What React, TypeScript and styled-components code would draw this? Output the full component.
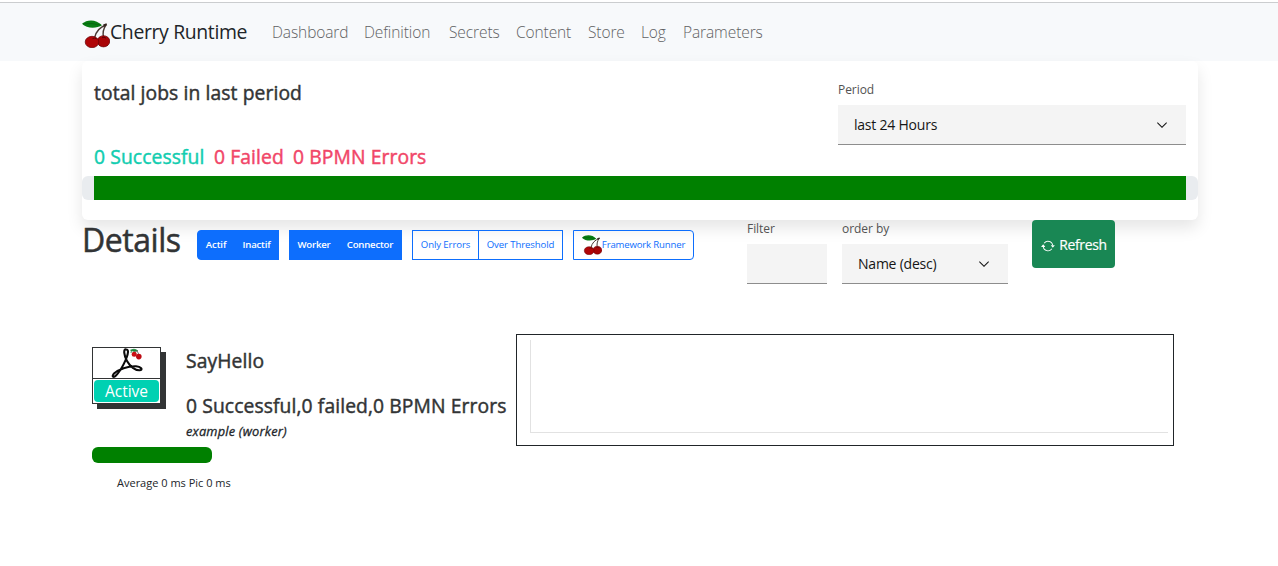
import React from "react";
import styled, { createGlobalStyle } from "styled-components";

const GlobalStyle = createGlobalStyle`
  *, *::before, *::after { box-sizing: border-box; }
  body {
    margin: 0;
    background: #fff;
    color: #212529;
    font-family: "Segoe UI", "Open Sans", "Noto Sans", sans-serif;
    font-size: 16px;
    line-height: 24px;
  }
  h1, h2, h3, p { margin: 0; }
`;

const Page = styled.div`
  height: 566px;
  padding-top: 2px;
  overflow: hidden;
`;

const Navbar = styled.nav`
  display: flex;
  align-items: center;
  height: 59px;
  padding: 0 82px;
  border-top: 1px solid #cbcdcf;
  background: #f7f9fb;
`;

const Brand = styled.a`
  display: flex;
  align-items: center;
  width: 190px;
  font-size: 19.4px;
  letter-spacing: -0.35px;
  white-space: nowrap;
`;

const NavLink = styled.a<{ $w: number; $ls?: number }>`
  flex: none;
  width: ${(p) => p.$w}px;
  color: #5f6163;
  font-size: 15.5px;
  font-weight: 300;
  letter-spacing: ${(p) => p.$ls ?? -0.1}px;
  line-height: 22px;
  white-space: nowrap;
`;

const Container = styled.main`
  width: 1116px;
  margin-left: 82px;
`;

const SummaryCard = styled.section`
  height: 159px;
  border-radius: 6px;
  background: #fff;
  box-shadow: 0 8px 16px rgba(0, 0, 0, 0.1);
`;

const SummaryTop = styled.div`
  display: flex;
  justify-content: space-between;
  height: 115px;
  padding: 0 12px;
`;

const SummaryText = styled.div`
  display: flex;
  flex-direction: column;
  justify-content: space-between;
  padding: 20px 0 7px;
`;

const Title = styled.h3<{ $ls?: number }>`
  color: #323435;
  font-size: 19.3px;
  font-weight: 400;
  line-height: 24px;
  letter-spacing: ${(p) => p.$ls ?? 0.1}px;
  -webkit-text-stroke: 0.45px currentColor;
  white-space: nowrap;
`;

const Counters = styled.div`
  display: flex;
`;

const Counter = styled.span<{ $color: string; $w: number }>`
  width: ${(p) => p.$w}px;
  color: ${(p) => p.$color};
  font-size: 19.3px;
  letter-spacing: 0.1px;
  -webkit-text-stroke: 0.45px currentColor;
  white-space: nowrap;
`;

const Field = styled.div<{ $w: number; $top?: number; $mr?: number }>`
  flex: none;
  width: ${(p) => p.$w}px;
  margin-right: ${(p) => p.$mr ?? 0}px;
  padding-top: ${(p) => p.$top ?? 0}px;
`;

const Label = styled.label`
  display: block;
  height: 24px;
  color: #525252;
  font-size: 12px;
  line-height: 18px;
  letter-spacing: -0.05px;
`;

const SelectBox = styled.div`
  display: flex;
  align-items: center;
  justify-content: space-between;
  height: 40px;
  padding: 0 16px;
  border-bottom: 1px solid #8d8d8d;
  background: #f4f4f4;
  color: #161616;
  font-size: 14px;
  letter-spacing: -0.22px;
`;

const Progress = styled.div`
  height: 24px;
  padding: 0 12px;
  border-radius: 6px;
  background: #e9ecef;
`;

const ProgressFill = styled.div`
  height: 100%;
  background: #008000;
`;

const Toolbar = styled.section`
  position: relative;
  display: flex;
  height: 114px;
`;

const Heading = styled.h1`
  width: 115px;
  padding-top: 1px;
  color: #323435;
  font-size: 32px;
  font-weight: 400;
  line-height: 38px;
  letter-spacing: -0.45px;
  -webkit-text-stroke: 0.5px #323435;
`;

const Group = styled.div`
  display: flex;
  height: 30px;
  margin: 10px 10px 0 0;
`;

const GroupButton = styled.button<{ $w: number; $filled?: boolean; $radius?: string; $joined?: boolean; $ls?: number }>`
  display: flex;
  align-items: center;
  justify-content: center;
  width: ${(p) => p.$w}px;
  margin-left: ${(p) => (p.$joined ? -1 : 0)}px;
  padding: 0 0 2px;
  border: 1px solid #0d6efd;
  border-radius: ${(p) => p.$radius ?? "0"};
  background: ${(p) => (p.$filled ? "#0d6efd" : "transparent")};
  color: ${(p) => (p.$filled ? "#fff" : "#0d6efd")};
  font-family: inherit;
  font-size: 9.6px;
  font-weight: ${(p) => (p.$filled ? 600 : 400)};
  letter-spacing: ${(p) => p.$ls ?? -0.1}px;
  white-space: nowrap;

  svg {
    margin-top: 2px;
  }
`;

const Filters = styled.div`
  display: flex;
  margin-left: 43px;
`;

const TextInput = styled.input`
  display: block;
  width: 100%;
  height: 40px;
  border: 0;
  border-bottom: 1px solid #8d8d8d;
  border-radius: 0;
  background: #f4f4f4;
`;

const Refresh = styled.button`
  display: flex;
  align-items: center;
  justify-content: center;
  gap: 4px;
  width: 83px;
  height: 48px;
  padding: 0;
  border: 0;
  border-radius: 4px;
  background: #198754;
  color: #fff;
  font-family: inherit;
  font-size: 13.9px;
  font-weight: 400;
  letter-spacing: -0.3px;
  -webkit-text-stroke: 0.2px currentColor;
`;

const Job = styled.section`
  display: flex;
`;

const JobInfo = styled.div`
  width: 434px;
  padding-left: 10px;
`;

const JobTop = styled.div`
  display: flex;
  height: 113px;
`;

const Tile = styled.div`
  width: 69px;
  height: 57px;
  margin: 13px 25px 0 0;
  border: 1px solid #323435;
  background: #fff;
  box-shadow: 5px 5px 0 #323435;
`;

const TileLogo = styled.div`
  height: 31px;
  border-bottom: 1px solid #323435;
`;

const Badge = styled.div`
  height: 22px;
  margin: 1px;
  border-radius: 4px;
  background: #00d1b2;
  color: #fff;
  font-size: 15.5px;
  line-height: 22px;
  text-align: center;
`;

const JobText = styled.div`
  padding-top: 15px;
`;

const Result = styled(Title)`
  margin-top: 21px;
`;

const Kind = styled.p`
  padding-top: 1px;
  color: #212529;
  font-size: 12.8px;
  font-style: italic;
  letter-spacing: 0.2px;
  -webkit-text-stroke: 0.3px currentColor;
`;

const LoadBar = styled.div`
  width: 120px;
  height: 16px;
  border-radius: 6px;
  background: #008000;
`;

const Timing = styled.p`
  padding: 8px 0 0 25px;
  font-size: 11px;
  letter-spacing: 0;
`;

const Chart = styled.div`
  width: 658px;
  height: 112px;
  padding: 5px 5px 12px 13px;
  border: 1px solid #212529;
`;

const Plot = styled.div`
  height: 93px;
  border-bottom: 1px solid #e2e2e2;
  border-left: 1px solid #e2e2e2;
`;

const CherrySvg = styled.svg`
  flex: none;
`;

const BrandMark = styled.span`
  display: flex;
  padding-top: 4px;
`;

const Cherry = ({ size }: { size: number }) => (
  <CherrySvg width={size} height={size} viewBox="0 0 28 28">
    <path d="M24 5C18 7 14 11 12.500 18M24 5C21 9 20.500 13 21.500 18" fill="none" stroke="#4a3a35" strokeWidth="1.4" />
    <path d="M21.500 5.500L24.800 4.300" stroke="#33231e" strokeWidth="2" />
    <path d="M0 3.800C5-.7 14-1 20 5.300C15 8.500 5 9 0 3.800Z" fill="#087d13" />
    <path d="M1 3.900Q10 2.500 19 5.200" fill="none" stroke="#045e0b" strokeWidth=".7" />
    <ellipse cx="21.500" cy="21.300" rx="6.300" ry="5.600" fill="#a80507" stroke="#650004" strokeWidth=".7" />
    <ellipse cx="10" cy="22" rx="6.800" ry="5.700" fill="#b00507" stroke="#650004" strokeWidth=".7" />
    <path d="M10.500 18.600Q12.500 17.600 14.500 18.700M20 17.700Q22 16.700 24 18.100" fill="none" stroke="#5b0508" strokeWidth="1" />
  </CherrySvg>
);

const Chevron = () => (
  <svg width="16" height="16" viewBox="0 0 16 16" fill="#161616">
    <path d="M8 11L3 6l.7-.7L8 9.600l4.300-4.300L13 6z" />
  </svg>
);

const RepeatSvg = styled.svg`
  margin: 3px 0 0 1px;
`;

const RepeatIcon = () => (
  <RepeatSvg width="14" height="14" viewBox="0 0 16 16" fill="#fff">
    <path d="M11.534 7h3.932a.25.25 0 0 1 .192.410l-1.966 2.360a.25.25 0 0 1-.384 0l-1.966-2.360a.25.25 0 0 1 .192-.410zm-11 2h3.932a.25.25 0 0 0 .192-.410L2.692 6.230a.25.25 0 0 0-.384 0L.342 8.590A.25.25 0 0 0 .534 9z" />
    <path d="M8 3c-1.552 0-2.940.707-3.857 1.818a.5.5 0 1 1-.771-.636A6.002 6.002 0 0 1 13.917 7H12.900A5.002 5.002 0 0 0 8 3zM3.100 9a5.002 5.002 0 0 0 8.757 2.182.5.5 0 1 1 .771.636A6.002 6.002 0 0 1 2.083 9H3.100z" />
  </RepeatSvg>
);

const WorkerLogo = () => (
  <svg width="67" height="30" viewBox="0 0 67 30" fill="none">
    <path d="M33.300 1.500C30 .5 31 7.500 34 13C37 18.500 42.500 22.500 46.500 22.300C50.500 22 48 18.500 43 18.300C35 18 25.500 21 20.700 25.800C18.500 28.500 20.500 30 23 27.500C28 22.500 34.500 10 35 4C35 2.500 34.500 1.500 33.300 1.500Z" stroke="#0b0b0b" strokeWidth="2.100" />
    <path d="M37.500 2.200Q41 0 44.500 2.500L41.500 3.500ZM38.500 2.500L38 5" fill="#19863a" stroke="#19863a" strokeWidth=".8" />
    <path d="M41 6L44 2.500L46 7" stroke="#555" strokeWidth=".8" />
    <circle cx="41.200" cy="6.300" r="2.500" fill="#cb1015" />
    <circle cx="45.800" cy="8.600" r="2.800" fill="#bd0b13" />
  </svg>
);

export default function App() {
  return (
    <>
      <GlobalStyle />
      <Page>
        <Navbar>
          <Brand>
            <BrandMark>
              <Cherry size={28} />
            </BrandMark>
            Cherry Runtime
          </Brand>
          <NavLink $w={92}>Dashboard</NavLink>
          <NavLink $w={85}>Definition</NavLink>
          <NavLink $w={67}>Secrets</NavLink>
          <NavLink $w={72}>Content</NavLink>
          <NavLink $w={53}>Store</NavLink>
          <NavLink $w={42}>Log</NavLink>
          <NavLink $w={80}>Parameters</NavLink>
        </Navbar>
        <Container>
          <SummaryCard>
            <SummaryTop>
              <SummaryText>
                <Title>total jobs in last period</Title>
                <Counters>
                  <Counter $color="#12cdb0" $w={120}>0 Successful</Counter>
                  <Counter $color="#f14668" $w={79}>0 Failed</Counter>
                  <Counter $color="#f14668" $w={134}>0 BPMN Errors</Counter>
                </Counters>
              </SummaryText>
              <Field $w={348} $top={20}>
                <Label>Period</Label>
                <SelectBox>
                  last 24 Hours
                  <Chevron />
                </SelectBox>
              </Field>
            </SummaryTop>
            <Progress>
              <ProgressFill />
            </Progress>
          </SummaryCard>
          <Toolbar>
            <Heading>Details</Heading>
            <Group>
              <GroupButton $w={38} $filled $radius="4px 0 0 4px">Actif</GroupButton>
              <GroupButton $w={45} $filled $joined $ls={-0.2}>Inactif</GroupButton>
            </Group>
            <Group>
              <GroupButton $w={50} $filled $ls={-0.2}>Worker</GroupButton>
              <GroupButton $w={64} $filled $joined $ls={-0.2}>Connector</GroupButton>
            </Group>
            <Group>
              <GroupButton $w={67}>Only Errors</GroupButton>
              <GroupButton $w={85} $joined>Over Threshold</GroupButton>
            </Group>
            <Group>
              <GroupButton $w={121} $radius="0 4px 4px 0" $ls={-0.17}>
                <Cherry size={20} />
                Framework Runner
              </GroupButton>
            </Group>
            <Filters>
              <Field $w={80} $mr={15}>
                <Label>Filter</Label>
                <TextInput />
              </Field>
              <Field $w={166} $mr={24}>
                <Label>order by</Label>
                <SelectBox>
                  Name (desc)
                  <Chevron />
                </SelectBox>
              </Field>
              <Refresh>
                <RepeatIcon />
                Refresh
              </Refresh>
            </Filters>
          </Toolbar>
          <Job>
            <JobInfo>
              <JobTop>
                <Tile>
                  <TileLogo>
                    <WorkerLogo />
                  </TileLogo>
                  <Badge>Active</Badge>
                </Tile>
                <JobText>
                  <Title>SayHello</Title>
                  <Result $ls={0.1}>0 Successful,0 failed,0 BPMN Errors</Result>
                  <Kind>example (worker)</Kind>
                </JobText>
              </JobTop>
              <LoadBar />
              <Timing>Average 0 ms Pic 0 ms</Timing>
            </JobInfo>
            <Chart>
              <Plot />
            </Chart>
          </Job>
        </Container>
      </Page>
    </>
  );
}
